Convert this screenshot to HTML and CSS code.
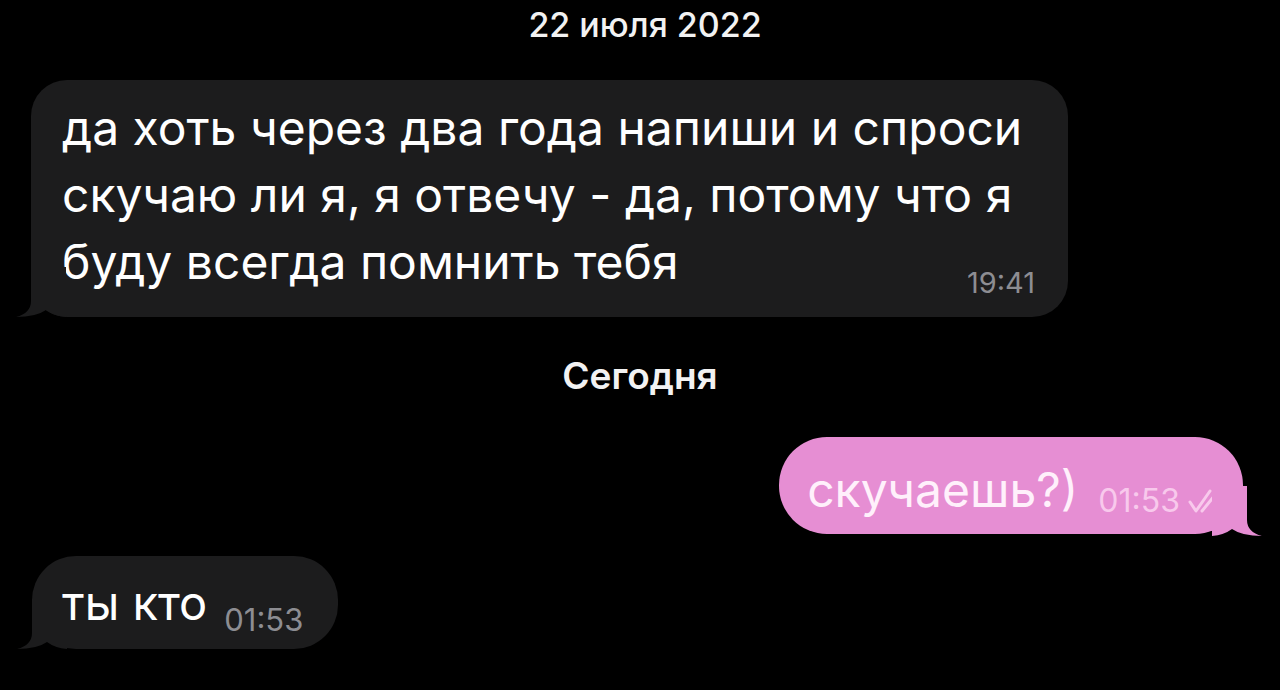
FILE: index.html
```html
<!DOCTYPE html>
<html lang="ru">
<head>
    <meta charset="UTF-8">
    <meta name="viewport" content="width=device-width, initial-scale=1.0">
    <title>Чат</title>
    <link rel="stylesheet" href="styles.css">
</head>
<body>
    <div class="chat">
        <div class="day day-first">22 июля 2022</div>

        <div class="bubble incoming big">
            <span class="text">да хоть через два года напиши и спроси скучаю ли я, я отвечу - да, потому что я буду всегда помнить тебя</span>
            <span class="time time-corner">19:41</span>
            <svg class="tail" viewBox="0 0 50 50" width="50" height="50"><path d="M15 0 L15 34 Q15 46 0 50 Q20 50 30 43 Q38 49 50 50 L50 0 Z"/></svg>
        </div>

        <div class="day day-today">Сегодня</div>

        <div class="bubble outgoing">
            <span class="text">скучаешь?)</span>
            <span class="time">01:53</span>
            <svg class="checks" viewBox="0 0 34 26" width="34" height="26">
                <polyline points="2,15 8,24 22,4"/>
                <line x1="14" y1="24" x2="32" y2="2"/>
            </svg>
            <svg class="tail" viewBox="0 0 50 50" width="50" height="50"><path d="M15 0 L15 34 Q15 46 0 50 Q20 50 30 43 Q38 49 50 50 L50 0 Z"/></svg>
        </div>

        <div class="bubble incoming small">
            <span class="text">ты кто</span>
            <span class="time">01:53</span>
            <svg class="tail" viewBox="0 0 50 50" width="50" height="50"><path d="M15 0 L15 34 Q15 46 0 50 Q20 50 30 43 Q38 49 50 50 L50 0 Z"/></svg>
        </div>
    </div>
</body>
</html>
```

FILE: styles.css
```css
body {
    margin: 0;
    background: #000;
    color: #fff;
    font-family: Inter, "Noto Sans", sans-serif;
    width: 1280px;
    height: 690px;
    overflow: hidden;
}
.chat {
    display: flex;
    flex-direction: column;
}
.day {
    align-self: center;
    color: #f2f2f2;
}
.day-first {
    margin-top: 5px;
    margin-left: 10px;
    font-size: 34px;
    line-height: 40px;
    font-weight: 500;
}
.day-today {
    margin-top: 37px;
    font-size: 37px;
    line-height: 44px;
    font-weight: 600;
}
.bubble {
    position: relative;
    border-radius: 36px;
}
.incoming {
    background: #1c1c1d;
    align-self: flex-start;
}
.incoming .tail {
    position: absolute;
    left: -15px;
    bottom: 0;
    fill: #1c1c1d;
}
.big {
    margin: 35px 0 0 31px;
    width: 1037px;
    height: 237px;
    box-sizing: border-box;
    padding: 14px 33px 0 31px;
    font-size: 48px;
    line-height: 67px;
}
.time {
    color: #8d8d92;
}
.time-corner {
    position: absolute;
    right: 33px;
    bottom: 20px;
    font-size: 29px;
    line-height: 29px;
}
.outgoing {
    align-self: flex-end;
    margin: 39px 37px 0 0;
    height: 97px;
    box-sizing: border-box;
    padding: 0 21px 0 28px;
    background: #e68ed3;
    border-radius: 48px;
    display: flex;
    align-items: center;
}
.outgoing .text {
    color: #fff0fb;
    font-size: 48px;
    margin-top: 8px;
}
.outgoing .time {
    color: #f8c9ec;
    font-size: 32px;
    margin: 30px 0 0 20px;
}
.checks {
    margin: 29px 0 0 8px;
    fill: none;
    stroke: #f8c9ec;
    stroke-width: 3;
    stroke-linecap: round;
    stroke-linejoin: round;
}
.outgoing .tail {
    position: absolute;
    right: -19px;
    bottom: -2px;
    fill: #e68ed3;
    transform: scaleX(-1);
}
.small {
    margin: 22px 0 0 32px;
    height: 93px;
    box-sizing: border-box;
    padding: 0 35px 0 30px;
    display: flex;
    align-items: center;
    border-radius: 44px;
}
.small .text {
    font-size: 47px;
}
.small .time {
    font-size: 31px;
    margin: 34px 0 0 17px;
}
```
